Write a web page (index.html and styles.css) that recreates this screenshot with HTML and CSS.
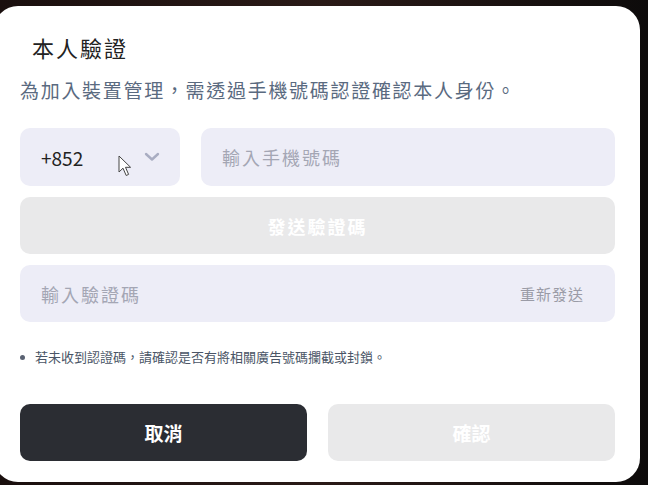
FILE: index.html
```html
<!DOCTYPE html>
<html lang="zh-Hant">
  <head>
    <meta charset="UTF-8" />
    <meta name="viewport" content="width=device-width, initial-scale=1.0" />
    <title>本人驗證</title>
    <link rel="stylesheet" href="styles.css">
  </head>
  <body>
    <div class="dialog">
      <h2 class="dialog-title">本人驗證</h2>
      <p class="dialog-desc">為加入裝置管理，需透過手機號碼認證確認本人身份。</p>

      <div class="phone-row">
        <div class="field country">
          <span class="country-code">+852</span>
          <svg class="chevron" width="16" height="10" viewBox="0 0 16 10">
            <path d="M2 2 L8 7.5 L14 2" fill="none" stroke="#a9adc2" stroke-width="2.4" stroke-linecap="round" stroke-linejoin="round" />
          </svg>
          <!-- mouse pointer from the capture -->
          <svg class="cursor" width="14" height="22" viewBox="0 0 14 22">
            <path d="M1 1 L1 17 L5 13.2 L8.2 20.5 L10.6 19.4 L7.5 12.3 L12.6 12.3 Z" fill="#fff" stroke="#444" stroke-width="1" stroke-linejoin="round" />
          </svg>
        </div>
        <div class="field phone">
          <span class="placeholder">輸入手機號碼</span>
        </div>
      </div>

      <button class="btn btn-disabled btn-send">發送驗證碼</button>

      <div class="field code">
        <span class="placeholder">輸入驗證碼</span>
        <span class="resend">重新發送</span>
      </div>

      <ul class="notes">
        <li>若未收到認證碼，請確認是否有將相關廣告號碼攔截或封鎖。</li>
      </ul>

      <div class="actions">
        <button class="btn btn-dark">取消</button>
        <button class="btn btn-disabled">確認</button>
      </div>
    </div>
  </body>
</html>
```

FILE: styles.css
```css
body {
  margin: 0;
  height: 485px;
  overflow: hidden;
  font-family: "Noto Sans CJK TC", "Noto Sans", sans-serif;
  background: linear-gradient(90deg, #1a0f0e, #2a1a17 50%, #0d0b0b); /* dark backdrop */
  padding-top: 6px;
  box-sizing: border-box;
}

.dialog {
  margin-left: -6px;
  width: 646px;
  height: 476px;
  box-sizing: border-box;
  background-color: #fff;
  border-radius: 24px;
  padding: 24px 25px 0 26px;
}

.dialog-title {
  margin: 0 0 0 12px;
  font-size: 22px;
  font-weight: 400;
  letter-spacing: 2px;
  line-height: 34px;
  color: #222;
}

.dialog-desc {
  margin: 12px 0 0;
  font-size: 19px;
  line-height: 28px;
  color: #5a6a80;
  letter-spacing: 1.7px;
}

.phone-row {
  display: flex;
  gap: 21px;
  margin-top: 24px;
}

.field {
  position: relative;
  display: flex;
  align-items: center;
  height: 58px;
  box-sizing: border-box;
  padding: 0 21px;
  background-color: #ededf7;
  border-radius: 10px;
}

.country {
  width: 160px;
  flex: none;
}

.country-code {
  font-size: 19px;
  color: #222;
}

.chevron {
  position: absolute;
  left: 124px;
  top: 24px;
}

.cursor {
  position: absolute;
  left: 98px;
  top: 27px;
}

.phone {
  flex: 1;
}

.placeholder {
  font-size: 18px;
  letter-spacing: 2px;
  color: #a4a6b4;
}

.btn {
  display: block;
  border: none;
  border-radius: 10px;
  height: 57px;
  font-family: inherit;
  font-size: 18px;
  font-weight: 700;
  letter-spacing: 2px;
  color: #fff;
  cursor: pointer;
}

.btn-disabled {
  background-color: #e9e9ea;
}

.btn-send {
  width: 100%;
  margin-top: 11px;
}

.code {
  margin-top: 11px;
  justify-content: space-between;
  height: 57px;
  padding-right: 31px;
}

.resend {
  font-size: 15px;
  letter-spacing: 1px;
  color: #9a9ba6;
}

.notes {
  margin: 24px 0 0;
  padding: 0;
  list-style: none;
}

.notes li {
  position: relative;
  padding-left: 15px;
  font-size: 13px;
  line-height: 22px;
  color: #4a5566;
}

/* small bullet dot */
.notes li::before {
  content: "";
  position: absolute;
  left: 0;
  top: 9px;
  width: 5px;
  height: 5px;
  border-radius: 50%;
  background-color: #5a6272;
}

.actions {
  display: flex;
  gap: 21px;
  margin-top: 36px;
}

.actions .btn {
  flex: 1;
  font-size: 19px;
  letter-spacing: 0;
}

.btn-dark {
  background-color: #2b2d33;
}
```
